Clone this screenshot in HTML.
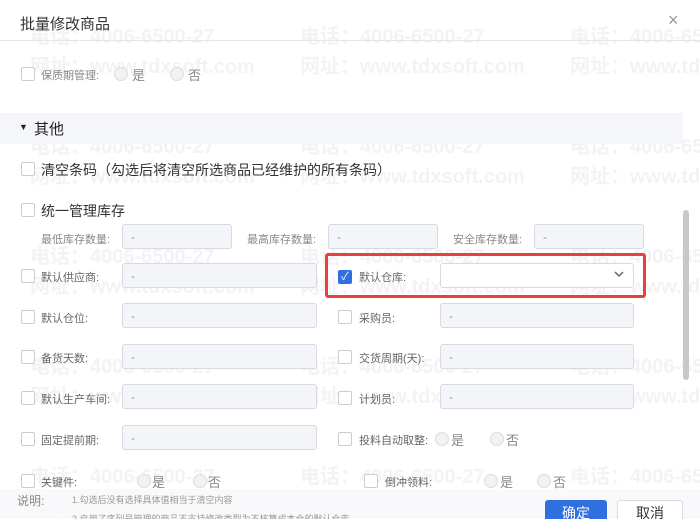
<!DOCTYPE html>
<html><head><meta charset="utf-8"><style>
*{box-sizing:border-box;margin:0;padding:0}
html,body{width:700px;height:519px;overflow:hidden}
body{background:#fff;font-family:"Liberation Sans","Noto Sans CJK SC",sans-serif;position:relative;color:#333}
.a{position:absolute}
.wmw{position:absolute;left:0;top:0;width:700px;height:519px;overflow:hidden;z-index:0}
.wm{position:absolute;font-size:20px;font-weight:bold;color:#f3f3f5;white-space:nowrap}
.cb{position:absolute;width:14px;height:14px;border:1px solid #ccc;border-radius:2px;background:#fff}
.lb{position:absolute;font-size:11px;color:#666;white-space:nowrap}
.in{position:absolute;height:25px;border:1px solid #d8d9e2;border-radius:3px;background:#f4f5f9;font-size:12px;color:#999;padding:5px 8px}
.rd{position:absolute;width:14px;height:14px;border:1px solid #ddd;border-radius:50%;background:#f2f2f4}
.rt{position:absolute;font-size:13px;color:#888}
</style></head><body>
<div class="wmw">
<div class="wm" style="left:30px;top:20px">电话：4006-6500-27</div><div class="wm" style="left:300px;top:20px">电话：4006-6500-27</div><div class="wm" style="left:570px;top:20px">电话：4006-6500-27</div>
<div class="wm" style="left:30px;top:50px">网址：www.tdxsoft.com</div><div class="wm" style="left:300px;top:50px">网址：www.tdxsoft.com</div><div class="wm" style="left:570px;top:50px">网址：www.tdxsoft.com</div>
<div class="wm" style="left:30px;top:130px">电话：4006-6500-27</div><div class="wm" style="left:300px;top:130px">电话：4006-6500-27</div><div class="wm" style="left:570px;top:130px">电话：4006-6500-27</div>
<div class="wm" style="left:30px;top:160px">网址：www.tdxsoft.com</div><div class="wm" style="left:300px;top:160px">网址：www.tdxsoft.com</div><div class="wm" style="left:570px;top:160px">网址：www.tdxsoft.com</div>
<div class="wm" style="left:30px;top:240px">电话：4006-6500-27</div><div class="wm" style="left:300px;top:240px">电话：4006-6500-27</div><div class="wm" style="left:570px;top:240px">电话：4006-6500-27</div>
<div class="wm" style="left:30px;top:270px">网址：www.tdxsoft.com</div><div class="wm" style="left:300px;top:270px">网址：www.tdxsoft.com</div><div class="wm" style="left:570px;top:270px">网址：www.tdxsoft.com</div>
<div class="wm" style="left:30px;top:350px">电话：4006-6500-27</div><div class="wm" style="left:300px;top:350px">电话：4006-6500-27</div><div class="wm" style="left:570px;top:350px">电话：4006-6500-27</div>
<div class="wm" style="left:30px;top:380px">网址：www.tdxsoft.com</div><div class="wm" style="left:300px;top:380px">网址：www.tdxsoft.com</div><div class="wm" style="left:570px;top:380px">网址：www.tdxsoft.com</div>
<div class="wm" style="left:30px;top:460px">电话：4006-6500-27</div><div class="wm" style="left:300px;top:460px">电话：4006-6500-27</div><div class="wm" style="left:570px;top:460px">电话：4006-6500-27</div>
<div class="wm" style="left:30px;top:490px">网址：www.tdxsoft.com</div><div class="wm" style="left:300px;top:490px">网址：www.tdxsoft.com</div><div class="wm" style="left:570px;top:490px">网址：www.tdxsoft.com</div>
</div>

<div class="a" style="left:0;top:0;width:700px;height:519px;z-index:1;overflow:hidden">
<div class="a" style="left:20px;top:13px;font-size:15px;color:#333">批量修改商品</div>
<div class="a" style="left:668px;top:10px;font-size:18px;color:#999">×</div>
<div class="a" style="left:0;top:40px;width:700px;height:1px;background:#e6e6ea"></div>

<div class="cb" style="left:21px;top:67px"></div><div class="lb" style="left:41px;top:67px;color:#888">保质期管理:</div>
<div class="rd" style="left:114px;top:67px"></div><div class="rt" style="left:132px;top:65px">是</div>
<div class="rd" style="left:170px;top:67px"></div><div class="rt" style="left:188px;top:65px">否</div>

<div class="a" style="left:0;top:113px;width:683px;height:31px;background:#f5f6fa"></div>
<div class="a" style="left:19px;top:122px;font-size:9px;color:#222">▼</div>
<div class="a" style="left:34px;top:118px;font-size:15px;color:#222">其他</div>

<div class="cb" style="left:21px;top:162px"></div><div class="a" style="left:41px;top:160px;font-size:14px;color:#333">清空条码（勾选后将清空所选商品已经维护的所有条码）</div>
<div class="cb" style="left:21px;top:203px"></div><div class="a" style="left:41px;top:201px;font-size:14px;color:#333">统一管理库存</div>

<div class="lb" style="left:41px;top:231px;color:#888">最低库存数量:</div><div class="in" style="left:122px;top:224px;width:110px">-</div>
<div class="lb" style="left:247px;top:231px;color:#888">最高库存数量:</div><div class="in" style="left:328px;top:224px;width:110px">-</div>
<div class="lb" style="left:453px;top:231px;color:#888">安全库存数量:</div><div class="in" style="left:534px;top:224px;width:110px">-</div>

<div class="cb" style="left:21px;top:269px"></div><div class="lb" style="left:41px;top:269px">默认供应商:</div><div class="in" style="left:122px;top:263px;width:195px">-</div>
<div class="a" style="left:325px;top:253px;width:321px;height:45px;border:3px solid #e8403f;border-radius:3px"></div>
<div class="a" style="left:338px;top:270px;width:14px;height:14px;background:#2f6fdf;border-radius:2px;color:#fff;font-size:11px;line-height:14px;text-align:center">✓</div>
<div class="lb" style="left:359px;top:269px">默认仓库:</div>
<div class="a" style="left:440px;top:263px;width:194px;height:25px;border:1px solid #d8d9e2;border-radius:3px;background:#fff"></div>
<svg class="a" style="left:613px;top:270px" width="12" height="8" viewBox="0 0 12 8"><path d="M2 2l4 4 4-4" stroke="#666" stroke-width="1.5" fill="none"/></svg>

<div class="cb" style="left:21px;top:310px"></div><div class="lb" style="left:41px;top:310px">默认仓位:</div><div class="in" style="left:122px;top:303px;width:195px">-</div>
<div class="cb" style="left:338px;top:310px"></div><div class="lb" style="left:359px;top:310px">采购员:</div><div class="in" style="left:440px;top:303px;width:194px">-</div>

<div class="cb" style="left:21px;top:350px"></div><div class="lb" style="left:41px;top:350px">备货天数:</div><div class="in" style="left:122px;top:344px;width:195px">-</div>
<div class="cb" style="left:338px;top:350px"></div><div class="lb" style="left:359px;top:350px">交货周期(天):</div><div class="in" style="left:440px;top:344px;width:194px">-</div>

<div class="cb" style="left:21px;top:391px"></div><div class="lb" style="left:41px;top:391px">默认生产车间:</div><div class="in" style="left:122px;top:384px;width:195px">-</div>
<div class="cb" style="left:338px;top:391px"></div><div class="lb" style="left:359px;top:391px">计划员:</div><div class="in" style="left:440px;top:384px;width:194px">-</div>

<div class="cb" style="left:21px;top:432px"></div><div class="lb" style="left:41px;top:432px">固定提前期:</div><div class="in" style="left:122px;top:425px;width:195px">-</div>
<div class="cb" style="left:338px;top:432px"></div><div class="lb" style="left:359px;top:432px">投料自动取整:</div>
<div class="rd" style="left:435px;top:432px"></div><div class="rt" style="left:451px;top:430px">是</div>
<div class="rd" style="left:490px;top:432px"></div><div class="rt" style="left:506px;top:430px">否</div>

<div class="cb" style="left:21px;top:474px"></div><div class="lb" style="left:41px;top:474px">关键件:</div>
<div class="rd" style="left:137px;top:474px"></div><div class="rt" style="left:152px;top:472px">是</div>
<div class="rd" style="left:193px;top:474px"></div><div class="rt" style="left:208px;top:472px">否</div>
<div class="cb" style="left:364px;top:474px"></div><div class="lb" style="left:385px;top:474px">倒冲领料:</div>
<div class="rd" style="left:484px;top:474px"></div><div class="rt" style="left:500px;top:472px">是</div>
<div class="rd" style="left:537px;top:474px"></div><div class="rt" style="left:553px;top:472px">否</div>

<div class="a" style="left:683px;top:210px;width:6px;height:170px;background:#c8c8cc;border-radius:3px"></div>

<div class="a" style="left:0;top:489px;width:700px;height:30px;background:rgba(248,249,251,0.92)"></div>
<div class="lb" style="left:17px;top:492px;color:#888;font-size:12px">说明:</div>
<div class="a" style="left:72px;top:493px;font-size:9px;color:#999;white-space:nowrap">1.勾选后没有选择具体值相当于清空内容</div>
<div class="a" style="left:72px;top:512px;font-size:9px;color:#999;white-space:nowrap">2.启用了序列号管理的商品不支持修改类型为不核算成本仓的默认仓库</div>
<div class="a" style="left:545px;top:500px;width:62px;height:24px;background:#2f6fdf;border-radius:3px;color:#fff;font-size:14px;text-align:center;line-height:26px">确定</div>
<div class="a" style="left:617px;top:500px;width:66px;height:24px;background:#fff;border:1px solid #d8d9e2;border-radius:3px;color:#333;font-size:14px;text-align:center;line-height:24px">取消</div>
</div>
</body></html>
